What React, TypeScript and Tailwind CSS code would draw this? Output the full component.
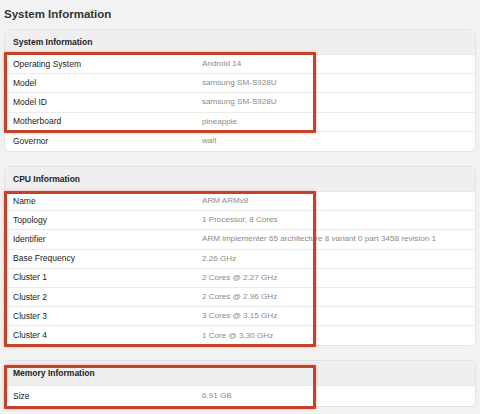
import React from "react"

type Row = { label: string; value: string }

const systemRows: Row[] = [
  { label: "Operating System", value: "Android 14" },
  { label: "Model", value: "samsung SM-S928U" },
  { label: "Model ID", value: "samsung SM-S928U" },
  { label: "Motherboard", value: "pineapple" },
]

const cpuRows: Row[] = [
  { label: "Name", value: "ARM ARMv8" },
  { label: "Topology", value: "1 Processor, 8 Cores" },
  { label: "Identifier", value: "ARM implementer 65 architecture 8 variant 0 part 3458 revision 1" },
  { label: "Base Frequency", value: "2.26 GHz" },
  { label: "Cluster 1", value: "2 Cores @ 2.27 GHz" },
  { label: "Cluster 2", value: "2 Cores @ 2.96 GHz" },
  { label: "Cluster 3", value: "3 Cores @ 3.15 GHz" },
  { label: "Cluster 4", value: "1 Core @ 3.30 GHz" },
]

function InfoRow({ row, last }: { row: Row; last?: boolean }) {
  return (
    <div
      className={`grid grid-cols-[189px_1fr] items-center h-[19.2px] pl-[8px] bg-white ${
        last ? "" : "border-b border-[#ebebeb]"
      }`}
    >
      <span className="text-[8.5px] text-[#222]">{row.label}</span>
      <span className="text-[8.1px] text-[#8a8a8a] whitespace-nowrap">{row.value}</span>
    </div>
  )
}

function CardHeader({ title }: { title: string }) {
  return (
    <div className="flex items-center h-[25px] pl-[8px] bg-[#efefef] border-b border-[#e6e6e6]">
      <span className="text-[8.5px] font-bold text-[#222]">{title}</span>
    </div>
  )
}

// red annotation box drawn over the rows
function Highlight({ className }: { className: string }) {
  return (
    <div
      className={`absolute left-[-1px] w-[312px] border-[3px] border-[#c5422a] rounded-[1px] shadow-[0_0_3px_rgba(240,120,80,0.6)] pointer-events-none ${className}`}
    />
  )
}

export default function App() {
  return (
    <div
      className="w-[480px] h-[414px] bg-[#f2f2f2] px-[4px] pt-[6px] overflow-hidden"
      style={{ fontFamily: '"Liberation Sans", Arial, sans-serif' }}
    >
      <h1 className="text-[11.5px] font-bold text-[#333] leading-[16px]">System Information</h1>

      {/* System card */}
      <div className="mt-[7px] w-[472px] rounded-[6px] border border-[#e2e2e2] bg-white">
        <div className="rounded-t-[6px] overflow-hidden">
          <CardHeader title="System Information" />
        </div>
        <div className="relative">
          {systemRows.map((r) => (
            <InfoRow key={r.label} row={r} />
          ))}
          <Highlight className="top-[-3px] bottom-[-1px]" />
        </div>
        <div className="rounded-b-[6px] overflow-hidden">
          <InfoRow row={{ label: "Governor", value: "walt" }} last />
        </div>
      </div>

      {/* CPU card */}
      <div className="mt-[14px] w-[472px] rounded-[6px] border border-[#e2e2e2] bg-white">
        <div className="rounded-t-[6px] overflow-hidden">
          <CardHeader title="CPU Information" />
        </div>
        <div className="relative">
          {cpuRows.map((r, i) => (
            <InfoRow key={r.label} row={r} last={i === cpuRows.length - 1} />
          ))}
          <Highlight className="top-[-1px] bottom-[-2px]" />
        </div>
      </div>

      {/* Memory card */}
      <div className="relative mt-[14px] w-[472px] rounded-[6px] border border-[#e2e2e2] bg-white">
        <div className="rounded-t-[6px] overflow-hidden">
          <CardHeader title="Memory Information" />
        </div>
        <div className="rounded-b-[6px] overflow-hidden">
          <InfoRow row={{ label: "Size", value: "6.91 GB" }} last />
        </div>
        <Highlight className="top-[4px] bottom-[-3px]" />
      </div>
    </div>
  )
}
